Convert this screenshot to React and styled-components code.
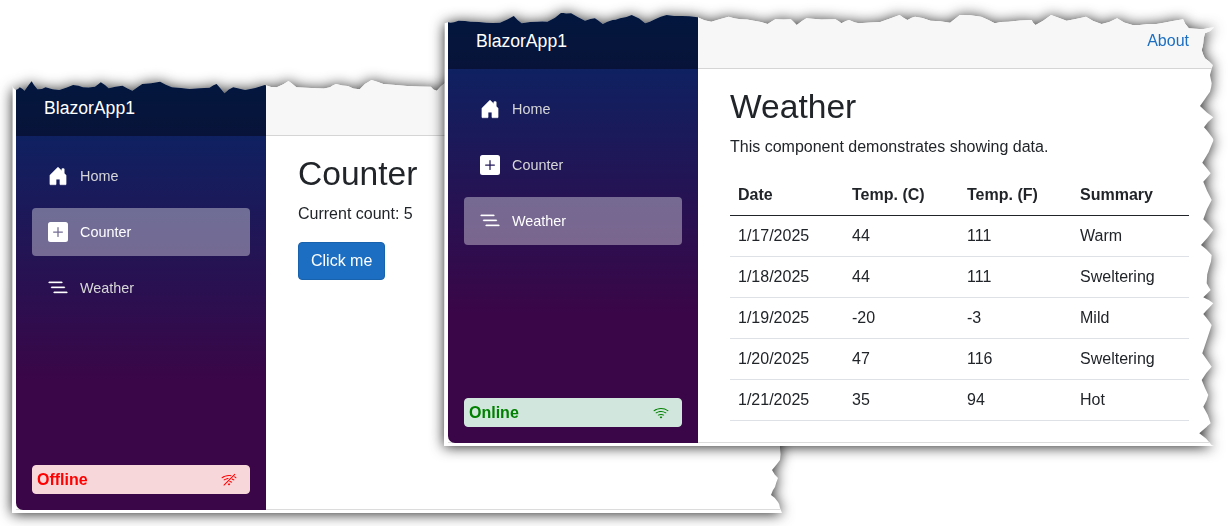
import React from "react";
import styled, { createGlobalStyle } from "styled-components";

const Global = createGlobalStyle`
  html, body { margin: 0; padding: 0; background: #fff; }
  body { font-family: "Liberation Sans", Arial, sans-serif; color: #212529; overflow: hidden; }
  * { box-sizing: border-box; }
`;

/* Torn paper outlines, traced from the picture in 3x-zoom coordinates. */
const frontTopA = [[1125,70],[1140,68],[1160,62],[1190,65],[1230,68],[1265,68],[1300,48],[1320,70],[1360,65],[1385,65],[1420,38],[1445,40],[1480,62],[1505,55],[1525,72],[1550,60]]
  .map(([x, y]) => [x / 2.53 - 444, y / 3 - 13]);
const frontTopB = [[0,55],[30,45],[65,70],[90,58],[120,45],[160,48],[200,52],[235,65],[280,50],[310,58],[345,62],[380,72],[400,58],[440,58],[455,75],[480,55],[555,58],[570,70],[590,60],[615,70],[670,66],[720,45],[740,60],[760,50],[800,62],[850,68],[875,45],[930,50],[965,70],[1000,65],[1060,60],[1070,75],[1110,45],[1150,62],[1200,50],[1240,72],[1280,55],[1320,75],[1360,72],[1400,68],[1450,58],[1465,85],[1500,88],[1530,82]]
  .map(([x, y]) => [176 + x / 2.575, y / 3 - 13]);
const frontRight = [[105,40],[100,70],[95,90],[105,115],[128,135],[120,165],[125,190],[120,215],[90,258],[130,292],[102,322],[125,350],[130,362],[97,428],[122,460],[100,485],[125,540],[100,598],[130,630],[93,675],[125,705],[118,740],[110,790],[122,810],[100,832],[130,850],[100,882],[125,915],[97,1000],[125,1040],[95,1080],[115,1125],[100,1160],[122,1210],[88,1240],[125,1275]]
  .map(([x, y]) => [726 + x / 3, 7 + y / 3]);
const backTop = [[32,258],[40,270],[50,262],[62,272],[80,244],[95,268],[115,262],[150,270],[185,255],[210,262],[240,260],[255,247],[275,265],[310,257],[335,272],[360,252],[405,245],[435,262],[480,267],[530,263],[548,252],[568,280],[590,262],[620,270],[670,255],[700,262],[730,243],[750,262],[800,265],[835,262],[850,252],[880,258],[910,268],[940,240],[970,252],[1030,258],[1090,260],[1105,272],[1125,250]]
  .map(([x, y]) => [x / 2.53 - 12, y / 3 - 80]);
const backRight = [[768,368],[768,380],[760,390],[766,398],[763,407],[759,415],[766,422],[768,428]];

function outline(points, seed) {
  let s = seed;
  const rnd = () => {
    s = (s * 16807) % 2147483647;
    return s / 2147483647 - 0.5;
  };
  const out = [];
  points.forEach((pt, i) => {
    out.push(pt);
    const next = points[i + 1];
    if (next) {
      out.push([(pt[0] + next[0]) / 2 + rnd() * 1.6, (pt[1] + next[1]) / 2 + rnd() * 1.6]);
    }
  });
  const all = [...out, [770, 433], [0, 433]];
  return `polygon(${all.map(([x, y]) => `${x.toFixed(1)}px ${y.toFixed(1)}px`).join(",")})`;
}

const frontClip = outline([...frontTopA, ...frontTopB, ...frontRight], 90210);
const backClip = outline([...backTop, [770, 6], ...backRight], 4711);

const Desktop = styled.div`
  position: relative;
  width: 1229px;
  height: 526px;
  overflow: hidden;
  background: #fff;
`;

const Shadow = styled.div`
  position: absolute;
  left: ${(p) => p.$x}px;
  top: ${(p) => p.$y}px;
  filter: drop-shadow(0 1px 7px rgba(0, 0, 0, 0.85));
`;

const Window = styled.div`
  width: 770px;
  height: 433px;
  background: #fff;
  padding: 0 0 3px 4px;
  clip-path: ${(p) => p.$clip};
  display: flex;
`;

const Frame = styled.div`
  flex: 1;
  display: flex;
  min-width: 0;
  border-bottom: 1px solid #dcdcdc;
`;

const Sidebar = styled.aside`
  width: 250px;
  flex: none;
  height: 430px;
  display: flex;
  flex-direction: column;
  border-bottom-left-radius: 7px;
  background: linear-gradient(180deg, rgb(5, 39, 103) 0%, #3a0647 70%);
`;

const Brand = styled.div`
  height: 56px;
  flex: none;
  display: flex;
  align-items: center;
  padding-left: 28px;
  background: rgba(0, 0, 0, 0.4);
  color: #fff;
  font-size: 17.6px;
`;

const Nav = styled.nav`
  display: flex;
  flex-direction: column;
  gap: 8px;
  padding: 16px 16px 0;
`;

const NavLink = styled.div`
  height: 48px;
  display: flex;
  align-items: center;
  padding-left: 16px;
  border-radius: 4px;
  font-size: 14.4px;
  color: ${(p) => (p.$active ? "#fff" : "#d7d7d7")};
  background: ${(p) => (p.$active ? "rgba(255, 255, 255, 0.37)" : "transparent")};
`;

const NavIcon = styled.svg`
  width: 20px;
  height: 20px;
  margin-right: 12px;
  flex: none;
  fill: #fff;
  stroke: #fff;
  stroke-width: ${(p) => p.$weight};
`;

const Status = styled.div`
  margin: auto 16px 16px;
  height: 29px;
  display: flex;
  align-items: center;
  justify-content: space-between;
  padding: 0 12px 0 4px;
  border-radius: 4px;
  font-size: 16px;
  font-weight: 700;
  color: ${(p) => p.$color};
  background: ${(p) => p.$bg};
  border: 1px solid ${(p) => p.$bg};
`;

const StatusIcon = styled.svg`
  width: 16px;
  height: 16px;
  fill: ${(p) => p.$color};
`;

const Main = styled.main`
  flex: 1;
  min-width: 0;
  display: flex;
  flex-direction: column;
`;

const TopBar = styled.header`
  height: 56px;
  flex: none;
  display: flex;
  align-items: center;
  justify-content: flex-end;
  padding-right: 25px;
  background: #f7f7f7;
  border-bottom: 1px solid #d6d5d5;
`;

const About = styled.a`
  color: #1b6ec2;
  font-size: 16px;
`;

const Content = styled.div`
  padding: 14px 25px 0 32px;
`;

const Title = styled.h1`
  margin: 0 0 4px;
  font-size: 33.6px;
  line-height: 48px;
  font-weight: 400;
  color: #212529;
`;

const Text = styled.p`
  margin: 0 0 16px;
  font-size: 16px;
  line-height: 24px;
`;

const Button = styled.button`
  height: 38px;
  padding: 0 12px;
  font: 400 16px "Liberation Sans", Arial, sans-serif;
  color: #fff;
  background: #1b6ec2;
  border: 1px solid #1861ac;
  border-radius: 4px;
`;

const Table = styled.table`
  width: 100%;
  border-collapse: collapse;
  table-layout: fixed;
  font-size: 16px;
  line-height: 24px;
  color: #212529;
`;

const Head = styled.th`
  text-align: left;
  padding: 8px;
  font-weight: 700;
  width: ${(p) => p.$w}px;
  border-bottom: 1px solid #212529;
`;

const Cell = styled.td`
  padding: 8px;
  border-bottom: 1px solid #dee2e6;
`;

const P = {
  home: "M6.5 14.5v-3.505c0-.245.25-.495.5-.495h2c.25 0 .5.25.5.5v3.5a.5.5 0 0 0 .5.5h4a.5.5 0 0 0 .5-.5v-7a.5.5 0 0 0-.146-.354L13 5.793V2.5a.5.5 0 0 0-.5-.5h-1a.5.5 0 0 0-.5.5v1.293L8.354 1.146a.5.5 0 0 0-.708 0l-6 6A.5.5 0 0 0 1.5 7.5v7a.5.5 0 0 0 .5.5h4a.5.5 0 0 0 .5-.5Z",
  plus: "M2 0a2 2 0 0 0-2 2v12a2 2 0 0 0 2 2h12a2 2 0 0 0 2-2V2a2 2 0 0 0-2-2H2zm6.5 4.5v3h3a.5.5 0 0 1 0 1h-3v3a.5.5 0 0 1-1 0v-3h-3a.5.5 0 0 1 0-1h3v-3a.5.5 0 0 1 1 0z",
  list: "M4.5 11.5A.5.5 0 0 1 5 11h10a.5.5 0 0 1 0 1H5a.5.5 0 0 1-.5-.5zm-2-4A.5.5 0 0 1 3 7h10a.5.5 0 0 1 0 1H3a.5.5 0 0 1-.5-.5zm-2-4A.5.5 0 0 1 1 3h10a.5.5 0 0 1 0 1H1a.5.5 0 0 1-.5-.5z",
  wifi: "M15.384 6.115a.485.485 0 0 0-.047-.736A12.444 12.444 0 0 0 8 3C5.259 3 2.723 3.882.663 5.379a.485.485 0 0 0-.048.736.518.518 0 0 0 .668.05A11.448 11.448 0 0 1 8 4c2.507 0 4.827.802 6.716 2.164.205.148.49.13.668-.049zM13.229 8.271a.482.482 0 0 0-.063-.745A9.455 9.455 0 0 0 8 6c-1.905 0-3.68.56-5.166 1.526a.48.48 0 0 0-.063.745.525.525 0 0 0 .652.065A8.46 8.46 0 0 1 8 7a8.46 8.46 0 0 1 4.576 1.336c.206.132.48.108.653-.065zm-2.183 2.183c.226-.226.185-.605-.1-.75A6.473 6.473 0 0 0 8 9c-1.06 0-2.062.254-2.946.704-.285.145-.326.524-.1.75l.015.015c.16.16.407.19.611.09A5.478 5.478 0 0 1 8 10c.868 0 1.69.201 2.42.56.203.1.45.07.61-.091l.016-.015zM9.06 12.44c.196-.196.198-.52-.04-.66A1.99 1.99 0 0 0 8 11.5a1.99 1.99 0 0 0-1.02.28c-.238.14-.236.464-.04.66l.706.706a.5.5 0 0 0 .707 0l.707-.707z",
  wifiOff: "M10.706 3.294A12.545 12.545 0 0 0 8 3C5.259 3 2.723 3.882.663 5.379a.485.485 0 0 0-.048.736.518.518 0 0 0 .668.05A11.448 11.448 0 0 1 8 4c.63 0 1.249.05 1.852.148l.854-.854zM8 6c-1.905 0-3.68.56-5.166 1.526a.48.48 0 0 0-.063.745.525.525 0 0 0 .652.065 8.448 8.448 0 0 1 3.51-1.27L8 6zm2.596 1.404.785-.785c.63.24 1.227.545 1.785.907a.482.482 0 0 1 .063.745.525.525 0 0 1-.652.065 8.462 8.462 0 0 0-1.98-.932zM8 10l.933-.933a6.455 6.455 0 0 1 2.013.637c.285.145.326.524.1.75l-.015.015a.532.532 0 0 1-.611.09A5.478 5.478 0 0 0 8 10zm4.905-4.905.747-.747c.59.3 1.153.645 1.685 1.03a.485.485 0 0 1 .047.737.518.518 0 0 1-.668.05 11.493 11.493 0 0 0-1.811-1.07zM9.02 11.78c.238.14.236.464.04.66l-.707.706a.5.5 0 0 1-.707 0l-.707-.707c-.195-.195-.197-.518.04-.66A1.99 1.99 0 0 1 8 11.5c.374 0 .723.102 1.021.28zm4.355-9.905a.53.53 0 0 1 .75.75l-10.75 10.75a.53.53 0 0 1-.75-.75l10.75-10.75z",
};

const links = [
  ["Home", P.home, 0.35],
  ["Counter", P.plus, 0],
  ["Weather", P.list, 0.3],
];

const rows = [
  ["1/17/2025", "44", "111", "Warm"],
  ["1/18/2025", "44", "111", "Sweltering"],
  ["1/19/2025", "-20", "-3", "Mild"],
  ["1/20/2025", "47", "116", "Sweltering"],
  ["1/21/2025", "35", "94", "Hot"],
];

function AppWindow({ x, y, clip, active, online, about, children }) {
  const color = online ? "#008000" : "#ff0000";
  return (
    <Shadow $x={x} $y={y}>
      <Window $clip={clip}>
        <Frame>
          <Sidebar>
            <Brand>BlazorApp1</Brand>
            <Nav>
              {links.map(([label, d, weight]) => (
                <NavLink key={label} $active={label === active}>
                  <NavIcon $weight={weight} viewBox="0 0 16 16"><path d={d} /></NavIcon>
                  {label}
                </NavLink>
              ))}
            </Nav>
            <Status $color={color} $bg={online ? "#d1e7dd" : "#f8d7da"}>
              {online ? "Online" : "Offline"}
              <StatusIcon $color={color} viewBox="0 0 16 16">
                <path d={online ? P.wifi : P.wifiOff} />
              </StatusIcon>
            </Status>
          </Sidebar>
          <Main>
            <TopBar>{about && <About>About</About>}</TopBar>
            <Content>{children}</Content>
          </Main>
        </Frame>
      </Window>
    </Shadow>
  );
}

export default function App() {
  return (
    <Desktop>
      <Global />
      <AppWindow x={12} y={80} clip={backClip} active="Counter" online={false}>
        <Title>Counter</Title>
        <Text>Current count: 5</Text>
        <Button>Click me</Button>
      </AppWindow>
      <AppWindow x={444} y={13} clip={frontClip} active="Weather" online about>
        <Title>Weather</Title>
        <Text>This component demonstrates showing data.</Text>
        <Table>
          <thead>
            <tr>
              <Head $w={114}>Date</Head>
              <Head $w={115}>Temp. (C)</Head>
              <Head $w={113}>Temp. (F)</Head>
              <Head>Summary</Head>
            </tr>
          </thead>
          <tbody>
            {rows.map((r) => (
              <tr key={r[0]}>
                {r.map((c, i) => <Cell key={i}>{c}</Cell>)}
              </tr>
            ))}
          </tbody>
        </Table>
      </AppWindow>
    </Desktop>
  );
}
